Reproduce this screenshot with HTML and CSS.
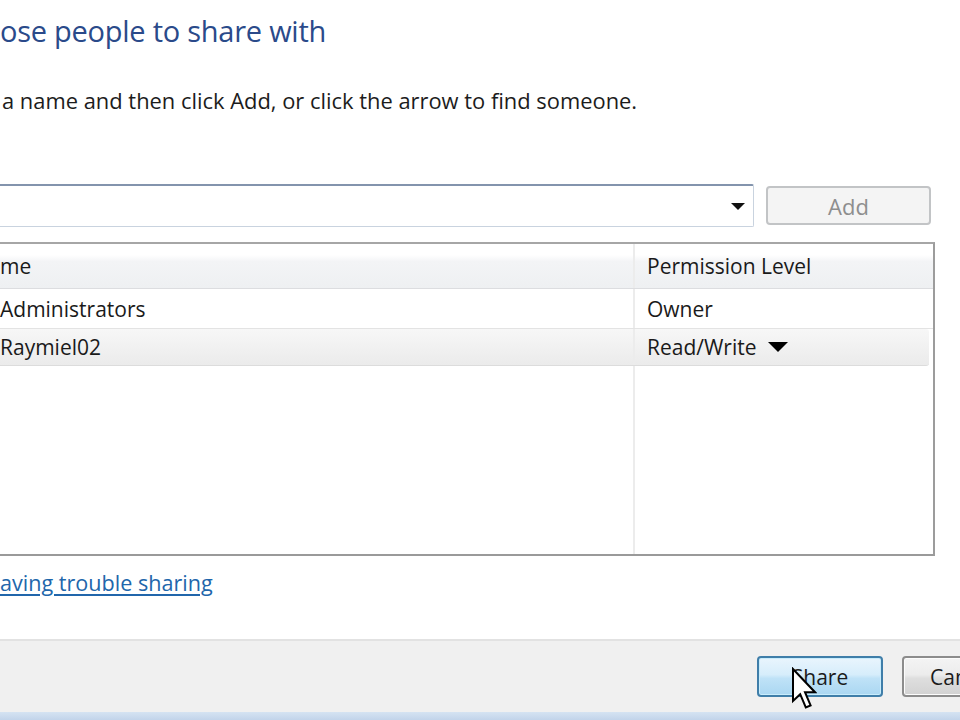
FILE: index.html
```html
<!DOCTYPE html>
<html lang="en">
<head>
<meta charset="utf-8">
<title>File Sharing</title>
<link rel="stylesheet" href="styles.css">
</head>
<body>
<div class="dialog">
  <div class="content">
    <h1 class="title">ose people to share with</h1>
    <p class="instr">a name and then click Add, or click the arrow to find someone.</p>
    <div class="pick-row">
      <div class="combo">
        <span class="combo-arrow"></span>
      </div>
      <button class="btn btn-add" disabled>Add</button>
    </div>
    <div class="list">
      <div class="row head">
        <div class="cell name">me</div>
        <div class="cell perm">Permission Level</div>
      </div>
      <div class="row">
        <div class="cell name">Administrators</div>
        <div class="cell perm">Owner</div>
      </div>
      <div class="row selected">
        <div class="cell name">Raymiel02</div>
        <div class="cell perm">Read/Write <span class="perm-arrow"></span></div>
      </div>
    </div>
    <a class="help" href="#">aving trouble sharing</a>
  </div>
  <div class="footer">
    <button class="btn btn-share">Share</button>
    <button class="btn btn-cancel">Cancel</button>
    <svg class="cursor" width="26" height="46" viewBox="0 0 13 23" xmlns="http://www.w3.org/2000/svg">
      <path d="M1 1 L1 17 L4.6 13.6 L7.4 20.2 L9.8 19.2 L7 12.6 L12 12.6 Z" fill="#fff" stroke="#000" stroke-width="1" stroke-linejoin="miter"/>
    </svg>
  </div>
  <div class="frame-strip"></div>
</div>
</body>
</html>
```

FILE: styles.css
```css
html, body {
  margin: 0;
  padding: 0;
  background: #fff;
  overflow: hidden;
}

body {
  width: 960px;
  height: 720px;
  font-family: "Open Sans", "Noto Sans", "Liberation Sans", sans-serif;
  color: #1a1a1a;
}

.dialog {
  height: 720px;
  display: flex;
  flex-direction: column;
}

.content {
  flex: 1;
  display: flex;
  flex-direction: column;
  align-items: flex-start;
}

.title {
  margin: 11px 0 0 0;
  font-size: 29px;
  font-weight: 400;
  line-height: 40px;
  color: #2a4a8a;
  letter-spacing: -0.25px;
}

.instr {
  margin: 36px 0 0 2px;
  font-size: 21.9px;
  line-height: 28px;
  color: #1c1c1c;
}

.pick-row {
  margin-top: 69px;
  display: flex;
  align-items: center;
  gap: 12px;
}

.combo {
  width: 757px;
  height: 43px;
  margin-left: -3px;
  box-sizing: border-box;
  border: 1px solid #c9d3df;
  border-top: 2px solid #8394ad;
  border-radius: 2px;
  background: #fff;
  display: flex;
  align-items: center;
  justify-content: flex-end;
  padding-right: 8px;
}

.combo-arrow {
  width: 0;
  height: 0;
  border-left: 7px solid transparent;
  border-right: 7px solid transparent;
  border-top: 7px solid #111;
}

.btn {
  font-family: inherit;
  box-sizing: border-box;
  border-radius: 4px;
  padding: 0;
  cursor: default;
}

.btn-add {
  width: 165px;
  height: 39px;
  border: 2px solid #c2c4c6;
  background: #f4f4f4;
  color: #8e8e8e;
  font-size: 22px;
}

.list {
  margin-top: 15px;
  margin-left: -3px;
  width: 938px;
  height: 314px;
  box-sizing: border-box;
  border: 2px solid #a6a6a6;
  border-right-color: #9c9c9c;
  border-bottom-color: #9a9a9a;
  display: flex;
  flex-direction: column;
  background:
    linear-gradient(to right, transparent 634px, #ececec 634px, #ececec 636px, transparent 636px);
}

.row {
  display: grid;
  grid-template-columns: 636px 1fr;
  height: 39px;
  align-items: center;
  font-size: 21px;
  border-bottom: 1px solid #e3e3e3;
  background: #fff;
}

.row .name {
  padding-left: 1px;
  height: 100%;
  display: flex;
  align-items: center;
  border-right: 2px solid #ececec;
  box-sizing: border-box;
}

.row .perm {
  padding-left: 12px;
  display: flex;
  align-items: center;
  gap: 11px;
}

.row.head {
  height: 44px;
  background: linear-gradient(#ffffff 0%, #ffffff 25%, #f3f4f6 40%, #eef0f2 100%);
  border-bottom: 1px solid #dcdde0;
}

.row.selected {
  height: 36px;
  margin-right: 4px;
  border-radius: 0 3px 3px 0;
  background: linear-gradient(#f7f7f7, #ebebeb);
  border-bottom: 1px solid #dcdcdc;
}

.perm-arrow {
  width: 0;
  height: 0;
  border-left: 10px solid transparent;
  border-right: 10px solid transparent;
  border-top: 10px solid #000;
}

.help {
  margin-top: 13px;
  font-size: 21.6px;
  line-height: 28px;
  color: #2166ab;
  text-decoration: underline;
  text-underline-offset: 3px;
}

.footer {
  position: relative;
  height: 73px;
  flex: none;
  box-sizing: border-box;
  border-top: 2px solid #e2e2e2;
  background: #f0f0f0;
  display: flex;
  align-items: center;
  padding-left: 757px;
  gap: 19px;
}

.btn-share,
.btn-cancel {
  flex: none;
  width: 126px;
  height: 41px;
  font-size: 21px;
  color: #1b1b1b;
}

.btn-share {
  border: 2px solid #3f7ea9;
  background: linear-gradient(#e9f5fd 0%, #d6edfb 45%, #bfe2f7 55%, #aad7f2 100%);
  box-shadow: inset 0 0 0 1px #c8ecfc;
}

.btn-cancel {
  border: 2px solid #8c8c8c;
  background: linear-gradient(#f4f4f4 0%, #ececec 45%, #dedede 55%, #d2d2d2 100%);
  box-shadow: inset 0 0 0 1px #fcfcfc;
  text-align: left;
  padding-left: 26px;
}

.cursor {
  position: absolute;
  left: 791px;
  top: 26px;
}

.frame-strip {
  height: 8px;
  flex: none;
  background: linear-gradient(#d5e3f2, #c2d4ea);
}
```
